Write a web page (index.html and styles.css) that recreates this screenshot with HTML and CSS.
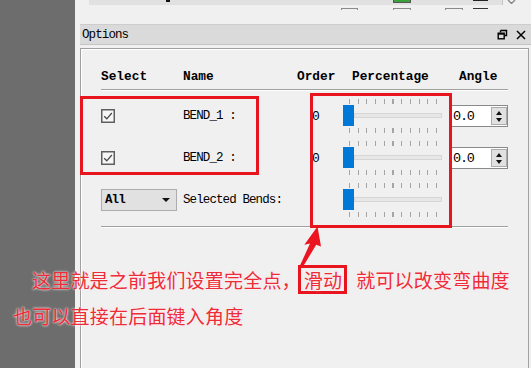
FILE: index.html
```html
<!DOCTYPE html>
<html lang="zh-CN">
<head>
  <meta charset="UTF-8">
  <title>Options</title>
  <link rel="stylesheet" href="styles.css">
</head>
<body>
  <div class="screen">
    <div class="side"></div>

    <div class="dock">
      <!-- bottom of the panel above -->
      <div class="prev">
        <div class="prev__top">
          <div class="prev__bar">
            <i class="mk mk--black"></i>
            <i class="mk mk--green"></i>
            <i class="mk mk--line"></i>
          </div>
          <svg class="prev__chev" width="9" height="4" viewBox="0 0 9 4"><path d="M1 0 L4.5 3.5 L8 0" fill="none" stroke="#8a8a8a" stroke-width="1.4"/></svg>
        </div>
        <div class="prev__boxes">
          <i class="bt bt--1"></i>
          <i class="bt bt--2"></i>
          <i class="bt bt--3"></i>
          <i class="bt bt--4"></i>
        </div>
      </div>

      <!-- options panel -->
      <div class="opt__title">
        <span>Options</span>
        <span class="opt__icons">
          <svg width="11" height="11" viewBox="0 0 11 11"><path d="M3.5 1.5 H9.5 V6.5 H7.5 M3.5 1.5 V3.5" fill="none" stroke="#000" stroke-width="1.4"/><rect x="1.2" y="4.2" width="6" height="5.6" fill="none" stroke="#000" stroke-width="1.4"/><path d="M1.2 4.9 H7.2" stroke="#000" stroke-width="1.6"/></svg>
          <svg width="10" height="10" viewBox="0 0 10 10"><path d="M1 1 L9 9 M9 1 L1 9" stroke="#000" stroke-width="1.5"/></svg>
        </span>
      </div>

      <div class="opt__body">
        <div class="head">
          <span class="c-sel">Select</span>
          <span class="c-name">Name</span>
          <span class="c-ord">Order</span>
          <span class="c-pct head__pct">Percentage</span>
          <span class="c-ang head__ang">Angle</span>
        </div>
        <div class="sep"></div>

        <div class="rows">
          <div class="row">
            <span class="c-sel">
              <svg class="chk" width="14" height="14" viewBox="0 0 14 14"><rect x="0.75" y="0.75" width="12.5" height="12.5" fill="#f7f7f7" stroke="#5f5f5f" stroke-width="1.5"/><path d="M3.2 7.2 L5.8 9.8 L10.8 4" fill="none" stroke="#4a4a4a" stroke-width="1.3"/></svg>
            </span>
            <span class="c-name">BEND_1 :</span>
            <span class="c-ord ord">0</span>
            <span class="c-pct">
              <div class="slider">
                <div class="ticks"></div>
                <div class="slider__rail"><span class="thumb"></span><span class="track"></span></div>
                <div class="ticks"></div>
              </div>
            </span>
            <span class="c-ang">
              <div class="spin"><span>0.0</span><span class="spin__btn"><i class="up"></i><i class="dn"></i></span></div>
            </span>
          </div>

          <div class="row">
            <span class="c-sel">
              <svg class="chk" width="14" height="14" viewBox="0 0 14 14"><rect x="0.75" y="0.75" width="12.5" height="12.5" fill="#f7f7f7" stroke="#5f5f5f" stroke-width="1.5"/><path d="M3.2 7.2 L5.8 9.8 L10.8 4" fill="none" stroke="#4a4a4a" stroke-width="1.3"/></svg>
            </span>
            <span class="c-name">BEND_2 :</span>
            <span class="c-ord ord">0</span>
            <span class="c-pct">
              <div class="slider">
                <div class="ticks"></div>
                <div class="slider__rail"><span class="thumb"></span><span class="track"></span></div>
                <div class="ticks"></div>
              </div>
            </span>
            <span class="c-ang">
              <div class="spin"><span>0.0</span><span class="spin__btn"><i class="up"></i><i class="dn"></i></span></div>
            </span>
          </div>

          <div class="row">
            <span class="c-sel">
              <div class="combo"><span>All</span><i class="combo__arrow"></i></div>
            </span>
            <span class="c-name">Selected Bends:</span>
            <span class="c-ord"></span>
            <span class="c-pct">
              <div class="slider">
                <div class="ticks"></div>
                <div class="slider__rail"><span class="thumb"></span><span class="track"></span></div>
                <div class="ticks"></div>
              </div>
            </span>
            <span class="c-ang"></span>
          </div>
        </div>
        <div class="sep sep--end"></div>
      </div>
    </div>

    <!-- annotation drawn over the screenshot -->
    <div class="mark mark--rows"></div>
    <div class="mark mark--sliders"></div>
    <svg class="arrow" width="30" height="46" viewBox="295 224 30 46">
      <path d="M317.5 226.5 L321 246.5 L316.2 244.8 L302.5 267.5 L299.3 267 L310 243.6 L304.3 244.8 Z" fill="#ea1520"/>
    </svg>
    <div class="note">
      <div class="note__l1">这里就是之前我们设置完全点，<span class="note__box">滑动</span>就可以改变弯曲度</div>
      <div>也可以直接在后面键入角度</div>
    </div>
  </div>
</body>
</html>
```

FILE: styles.css
```css
* {
  margin: 0;
  padding: 0;
  box-sizing: border-box;
}

body {
  width: 531px;
  height: 368px;
  overflow: hidden;
  background: #f0f0f0;
  font-family: "Liberation Mono", "DejaVu Sans Mono", monospace;
  font-size: 12.5px;
  letter-spacing: -0.9px;
  color: #000;
}

.screen {
  position: relative;
  display: flex;
  width: 531px;
  height: 368px;
}

.side {
  flex: none;
  width: 75px;
  background: #6d6d6d;
}

.dock {
  flex: 1;
  display: flex;
  flex-direction: column;
}

/* panel above, mostly cut off */
.prev {
  height: 24px;
  padding-left: 14px;
}

.prev__top {
  display: flex;
  align-items: flex-start;
}

.prev__bar {
  display: flex;
  align-items: flex-start;
  width: 414px;
  height: 5px;
  background: #e1e1e1;
  border-right: 1px solid #c4c4c4;
}

.mk {
  display: block;
}

.mk--black {
  width: 4px;
  height: 2px;
  margin-left: 77px;
  background: #111;
}

.mk--green {
  width: 18px;
  height: 3px;
  margin-left: 223px;
  background: #3aa03a;
  border: 1px solid #555;
  border-top: none;
}

.mk--line {
  width: 15px;
  height: 1px;
  margin-left: 62px;
  background: #222;
}

.prev__chev {
  margin-left: 4px;
}

.prev__boxes {
  display: flex;
  margin-top: 3px;
}

.bt {
  display: block;
  height: 2px;
  border: 1px solid #8a8a8a;
  border-bottom: none;
}

.bt--1 { width: 17px; margin-left: 252px; }
.bt--2 { width: 18px; margin-left: 35px; }
.bt--3 { width: 18px; margin-left: 34px; }
.bt--4 { width: 15px; margin-left: 10px; border-color: #333; border-left: none; border-right: none; }

/* options panel */
.opt__title {
  display: flex;
  align-items: center;
  justify-content: space-between;
  height: 21px;
  margin-left: 5px;
  padding: 0 5px 0 2px;
  background: #dadada;
  border-top: 1px solid #cdcdcd;
  border-bottom: 1px solid #c4c4c4;
}

.opt__icons {
  display: flex;
  align-items: center;
  gap: 8px;
}

.opt__body {
  flex: 1;
  margin: 3px 2px 0 5px;
  padding: 17px 20px 0;
  border: 1px solid #a0a0a0;
  border-bottom: none;
  box-shadow: inset 1px 1px 0 #fff;
}

.head {
  display: flex;
  align-items: center;
  height: 20px;
  font-size: 12.8px;
  font-weight: bold;
  letter-spacing: 0;
}

.c-sel { flex: none; width: 82px; display: flex; align-items: center; }
.c-name { flex: none; width: 114px; white-space: nowrap; }
.c-ord { flex: none; width: 46px; }
.c-pct { flex: none; width: 108px; }
.c-ang { flex: none; width: 57px; }

.head__pct { padding-left: 9px; }
.head__ang { padding-left: 8px; }

.sep {
  margin-top: 3px;
  border-top: 1px solid #a0a0a0;
  border-bottom: 1px solid #fff;
}

.sep--end {
  margin-top: 5px;
}

.rows {
  margin-top: 4px;
}

.row {
  display: flex;
  align-items: center;
  height: 42px;
}

.chk {
  display: block;
}

.ord {
  padding-left: 15px;
  font-size: 13px;
}

/* slider */
.slider {
  width: 99px;
}

.ticks {
  width: 88px;
  height: 5px;
  margin-left: 6px;
  background: repeating-linear-gradient(to right, #a4a4a4 0 1px, transparent 1px 8.7px);
}

.slider__rail {
  display: flex;
  align-items: center;
  height: 21px;
  margin: 1px 0 2px;
}

.thumb {
  width: 11px;
  height: 21px;
  background: #0078d7;
}

.track {
  flex: 1;
  height: 5px;
  background: #e7e7e7;
  border: 1px solid #d6d6d6;
}

/* spin box */
.spin {
  display: flex;
  align-items: center;
  width: 57px;
  height: 22px;
  padding-left: 1px;
  background: #fff;
  border: 1px solid #8a8a8a;
  font-size: 13.5px;
  letter-spacing: -1.2px;
}

.spin__btn {
  display: flex;
  flex-direction: column;
  align-items: center;
  justify-content: center;
  gap: 3px;
  width: 16px;
  height: 18px;
  margin-left: auto;
  background: #e1e1e1;
  border: 1px solid #adadad;
}

.up,
.dn {
  width: 0;
  height: 0;
  border-left: 3.5px solid transparent;
  border-right: 3.5px solid transparent;
}

.up { border-bottom: 4px solid #111; }
.dn { border-top: 4px solid #111; }

/* combo */
.combo {
  display: flex;
  align-items: center;
  width: 76px;
  height: 22px;
  padding: 0 6px 0 3px;
  background: #e1e1e1;
  border: 1px solid #adadad;
  font-weight: bold;
}

.combo__arrow {
  margin-left: auto;
  width: 0;
  height: 0;
  border-left: 4px solid transparent;
  border-right: 4px solid transparent;
  border-top: 4px solid #111;
}

/* annotation layer */
.mark {
  position: absolute;
  border: 3px solid #e8141e;
}

.mark--rows {
  left: 80px;
  top: 96px;
  width: 179px;
  height: 79px;
}

.mark--sliders {
  left: 310px;
  top: 93px;
  width: 142px;
  height: 135px;
}

.arrow {
  position: absolute;
  left: 295px;
  top: 224px;
}

.note {
  position: absolute;
  left: 13px;
  top: 262px;
  font-family: "Noto Sans CJK SC", sans-serif;
  font-size: 19px;
  letter-spacing: 0.2px;
  line-height: 36px;
  color: #ee2b38;
  white-space: nowrap;
  text-shadow: 0 0 2px rgba(255, 255, 255, 0.95), 0 0 3px rgba(255, 220, 220, 0.8);
}

.note__l1 {
  padding-left: 19px;
}

.note__box {
  display: inline-block;
  margin: 0 9px 0 -3px;
  padding: 0 2px 0 3px;
  line-height: 23px;
  border: 3px solid #e8141e;
}
```
